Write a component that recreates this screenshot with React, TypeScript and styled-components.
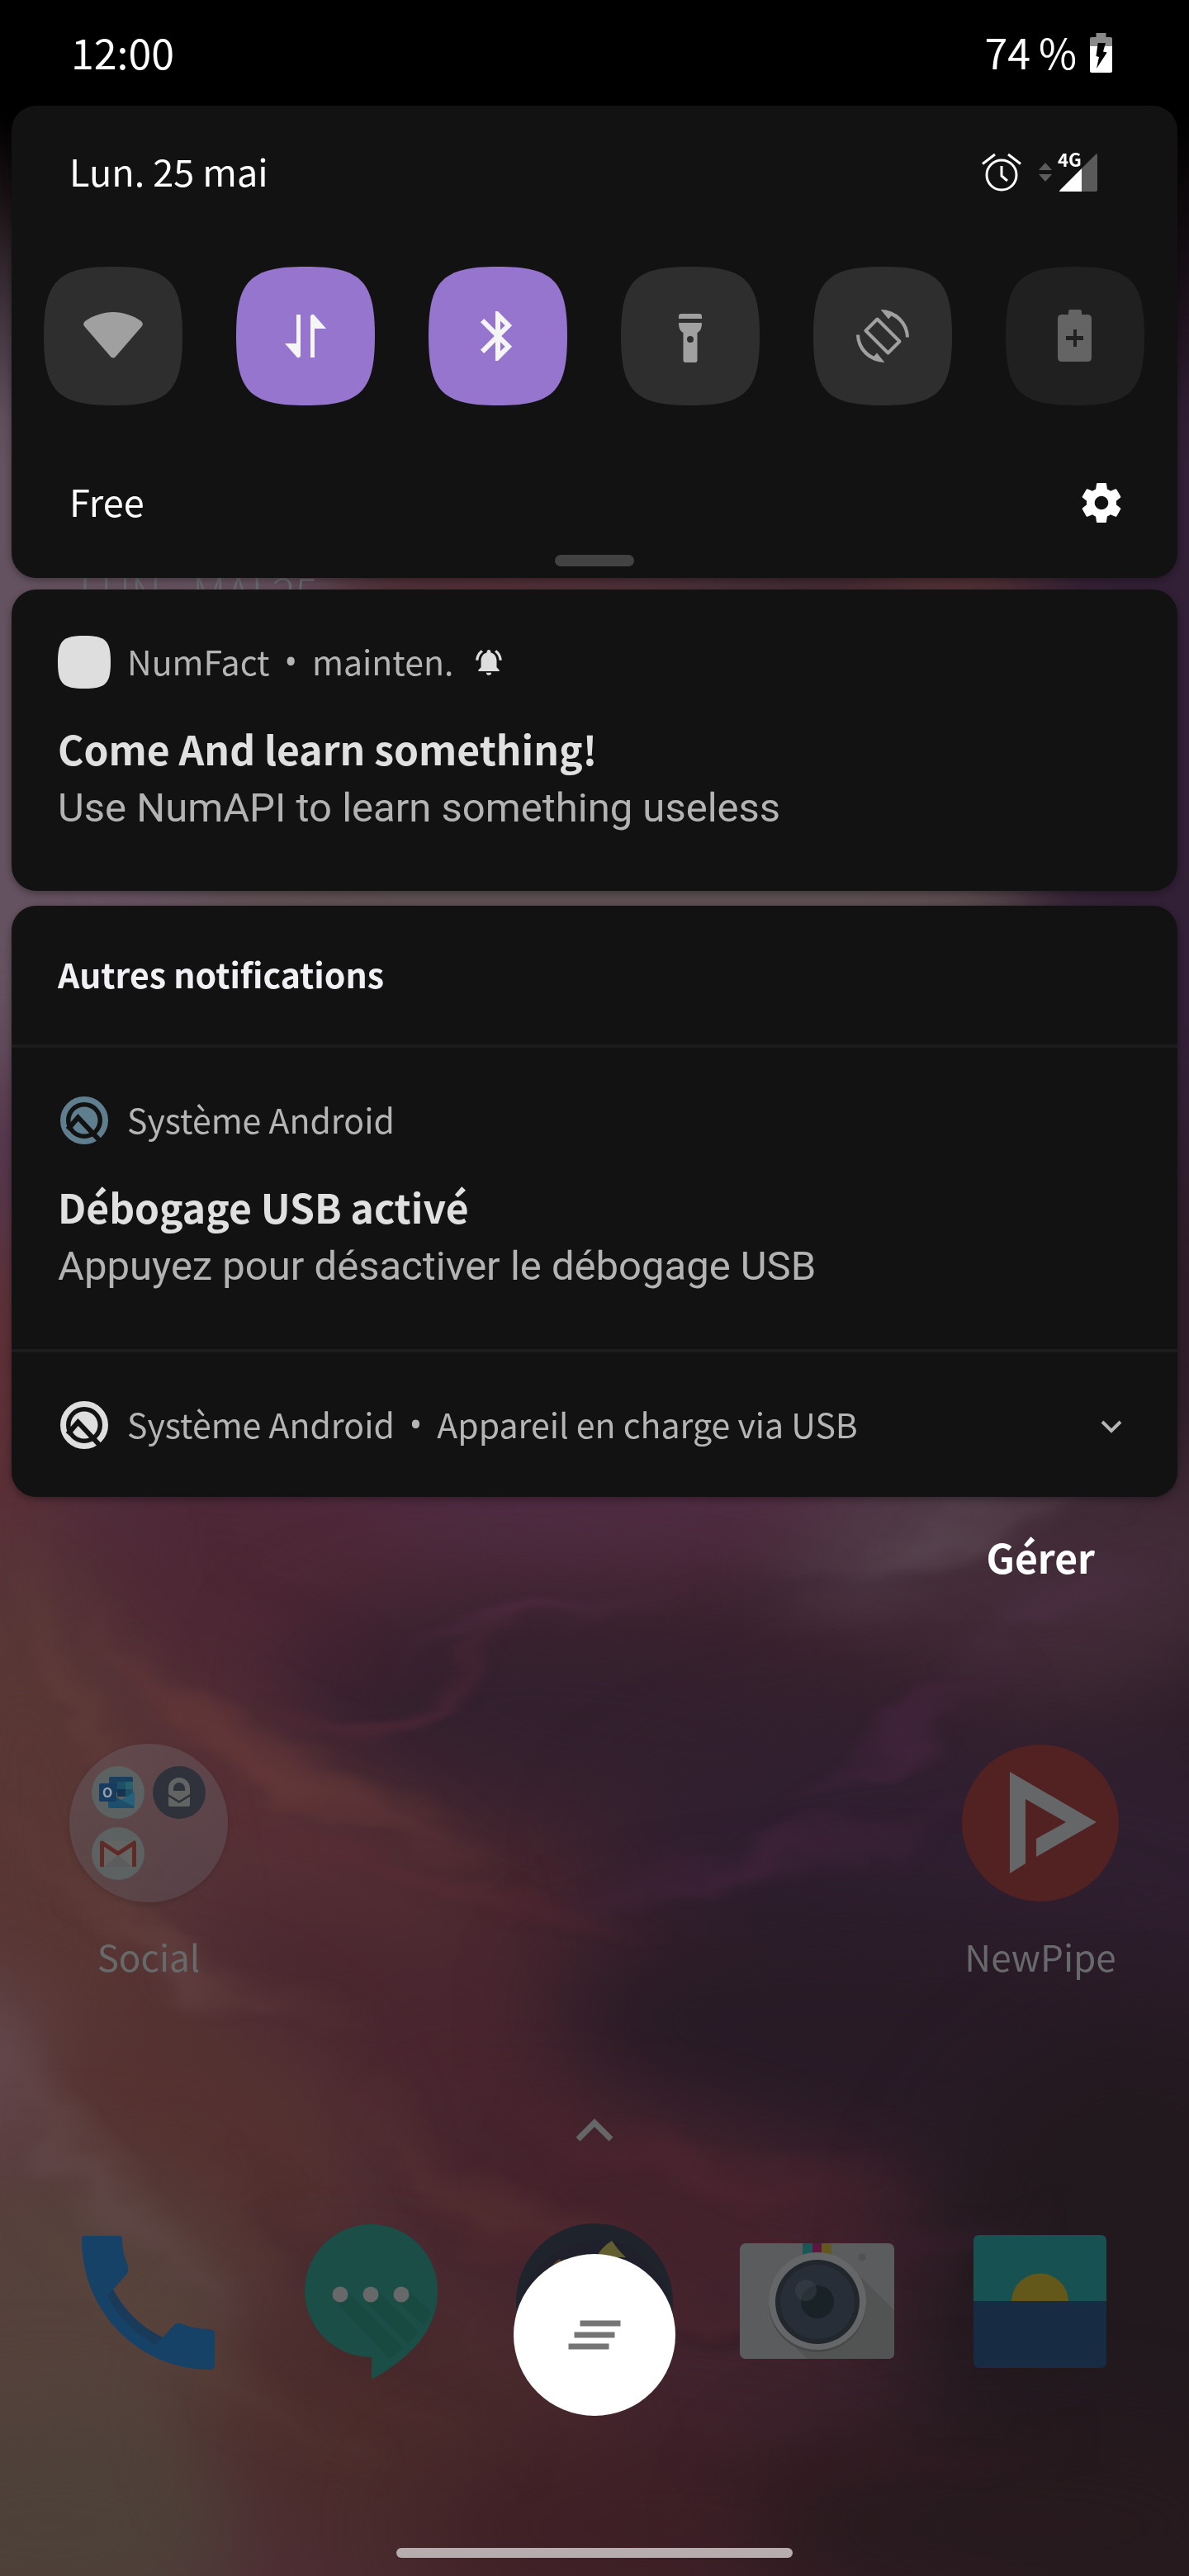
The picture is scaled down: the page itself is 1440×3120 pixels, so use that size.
import React from 'react';
import styled, { createGlobalStyle } from 'styled-components';

const slate = `"Noto Sans CJK SC", "Noto Sans", sans-serif`;
const roboto = `Roboto, "Noto Sans", sans-serif`;

const GlobalStyle = createGlobalStyle`
  *, *::before, *::after { box-sizing: border-box; }
  body { margin: 0; background: #000; font-family: ${slate}; }
  h1, h2, h3, p { margin: 0; font-size: inherit; font-weight: inherit; }
  svg { display: block; flex: none; }
`;

const Screen = styled.div`
  position: relative;
  isolation: isolate;
  display: grid;
  min-height: 100vh;
  overflow: hidden;
`;

const WallpaperSvg = styled.svg`
  position: absolute;
  inset: 0;
  width: 100%;
  height: 100%;
  z-index: -1;
`;

const HomeLayer = styled.main`
  grid-area: 1 / 1;
  display: flex;
  flex-direction: column;
  padding: 684px 84px 22px;
`;

const ShadeLayer = styled.section`
  position: relative;
  grid-area: 1 / 1;
  display: flex;
  flex-direction: column;
  padding-bottom: 194px;
`;

/* ---------- buttons ---------- */

const PlainButton = styled.button`
  display: flex;
  align-items: center;
  justify-content: center;
  padding: 0;
  border: 0;
  background: none;
  color: inherit;
  font: inherit;
  cursor: pointer;
`;

/* ---------- status bar ---------- */

const StatusBar = styled.header`
  display: flex;
  align-items: center;
  justify-content: space-between;
  height: 128px;
  padding: 0 93px 0 86px;
  color: #fff;
  font-size: 50px;
  line-height: 60px;
`;

const StatusGroup = styled.div<{ $gap: number }>`
  display: flex;
  align-items: center;
  gap: ${(p) => p.$gap}px;
`;

/* The face sits low in its line box; the padding lifts it level with icons. */
const Label = styled.span`
  padding-bottom: 4px;
`;

/* ---------- cards ---------- */

const Card = styled.section`
  margin: 0 14px;
  border-radius: 30px;
  background: #121212;
  box-shadow: 0 3px 10px rgba(0, 0, 0, 0.35);
`;

const QuickSettings = styled(Card)`
  display: flex;
  flex-direction: column;
  padding-bottom: 14px;
  margin-bottom: 14px;
  color: #fff;
  font-size: 45px;
  line-height: 60px;
`;

const QuickHeader = styled.div`
  display: flex;
  align-items: center;
  justify-content: space-between;
  height: 162px;
  padding: 0 97px 0 70px;
`;

const TileRow = styled.div`
  display: flex;
  justify-content: space-between;
  margin: 33px 40px 68px 39px;
`;

type TileState = 'on' | 'off' | 'disabled';
const tileBg: Record<TileState, string> = { on: '#9575cd', off: '#2e2e2e', disabled: '#202020' };
const tileFg: Record<TileState, string> = { on: '#f5f5f5', off: '#a0a0a0', disabled: '#646464' };

const Tile = styled(PlainButton)<{ $state: TileState }>`
  width: 168px;
  height: 168px;
  background: ${(p) => tileBg[p.$state]};
  color: ${(p) => tileFg[p.$state]};
  clip-path: path('M84 0C17 0 0 17 0 84S17 168 84 168 168 151 168 84 151 0 84 0Z');
`;

const QuickFooter = styled.div`
  display: flex;
  align-items: center;
  justify-content: space-between;
  height: 100px;
  padding: 0 62px 0 70px;
`;

const DragHandle = styled.div`
  align-self: center;
  width: 96px;
  height: 14px;
  margin-top: 13px;
  border-radius: 7px;
  background: #424242;
`;

const Alert = styled.article`
  padding: 56px 56px 65px;
`;

const AppLine = styled.div`
  display: flex;
  align-items: center;
  gap: 18px;
  min-height: 64px;
  color: #b5b5b5;
  font-size: 41px;
  line-height: 60px;
`;

const IconSlot = styled.span`
  display: grid;
  place-items: center;
  width: 66px;
  height: 64px;
  padding-right: 2px;
`;

const Bullet = styled(Label)`
  font-family: "Noto Sans", sans-serif;
`;

const AlertTitle = styled.h3`
  margin: 36px 0 2px;
  color: #e0e0e0;
  font-size: 48px;
  font-weight: 700;
  line-height: 72px;
`;

const AlertText = styled.p`
  color: #b3b3b3;
  font-family: ${roboto};
  font-size: 49px;
  line-height: 70px;
`;

const GroupCard = styled(Card)`
  margin-top: 18px;
`;

const GroupTitle = styled.h2`
  padding: 52px 56px 56px;
  color: #f0f0f4;
  font-size: 41px;
  font-weight: 700;
  line-height: 60px;
`;

const Divider = styled.hr`
  height: 4px;
  margin: 0;
  border: 0;
  background: #1c1c1e;
`;

const CompactAlert = styled.article`
  display: flex;
  align-items: center;
  justify-content: space-between;
  min-height: 175px;
  padding: 0 60px 0 56px;
`;

const ManageButton = styled(PlainButton)`
  align-self: flex-end;
  margin: 36px 114px 0 0;
  color: #fff;
  font-size: 48px;
  font-weight: 700;
  line-height: 72px;
`;

const ClearButton = styled(PlainButton)`
  align-self: center;
  width: 196px;
  height: 196px;
  margin-top: auto;
  border-radius: 50%;
  background: #fff;
`;

/* ---------- home screen ---------- */

const DateWidget = styled.p`
  padding-left: 12px;
  color: #686c6e;
  font-size: 52px;
  font-weight: 300;
  line-height: 64px;
`;

const AppRow = styled.nav`
  display: flex;
  justify-content: space-between;
`;

const HomeApps = styled(AppRow)`
  margin-top: auto;
`;

const AppLink = styled.a`
  display: flex;
  flex-direction: column;
  align-items: center;
  gap: 33px;
  width: 192px;
  color: #68696a;
  font-size: 44px;
  line-height: 64px;
  text-decoration: none;
`;

const Folder = styled.span`
  display: grid;
  grid-template-columns: 64px 64px;
  grid-template-rows: 64px 64px;
  gap: 10px;
  width: 192px;
  height: 192px;
  padding: 27px;
  border-radius: 50%;
  background: linear-gradient(#6a5f667a, #5e58606e);
  box-shadow: 0 2px 6px rgba(0, 0, 0, 0.12);
`;

const DrawerButton = styled(PlainButton)`
  align-self: center;
  margin: 163px 0 96px;
`;

const NavPill = styled.div`
  align-self: center;
  width: 480px;
  max-width: 100%;
  height: 12px;
  margin-top: 202px;
  border-radius: 6px;
  background: #b8adae;
`;

/* ---------- drawings ---------- */

type Stroke = { d: string; c: string; w: number; o: number };

const haze: [number, number, number, number, string, number, number][] = [
  // cx, cy, rx, ry, colour, opacity, rotation
  [0, 850, 420, 600, '#655260', 1, 0],
  [760, 1000, 560, 260, '#5e5052', 1, 0],
  [620, 690, 170, 60, '#552f38', 0.9, 0],
  [1190, 740, 150, 120, '#583438', 0.9, 20],
  [1440, 900, 190, 520, '#322036', 1, 0],
  [0, 1440, 110, 160, '#55354a', 1, 0],
  [0, 1700, 130, 200, '#5c3036', 1, 0],
  [620, 1790, 560, 130, '#4f2c42', 1, 0],
  [330, 1930, 240, 150, '#4e2735', 0.9, 30],
  [1120, 1850, 190, 70, '#56434e', 0.95, -28],
  [1330, 1920, 240, 130, '#452e3a', 0.9, -20],
  [760, 2090, 420, 130, '#33202e', 1, 8],
  [1180, 2260, 440, 160, '#2f1f30', 1, 0],
  [330, 2230, 280, 70, '#5a3135', 0.9, 32],
  [60, 2250, 130, 320, '#593734', 0.95, -12],
  [500, 2440, 240, 110, '#49252f', 0.8, 20],
  [1130, 2480, 460, 150, '#281b26', 1, 6],
  [20, 2540, 50, 140, '#705a62', 1, -30],
  [230, 2600, 220, 170, '#553230', 0.9, 30],
  [820, 2690, 320, 90, '#45222c', 0.9, 14],
  [1370, 2800, 260, 330, '#22191e', 1, 0],
  [90, 2850, 240, 220, '#56433d', 0.95, 20],
  [60, 3060, 230, 140, '#4d4139', 1, 0],
  [480, 2950, 240, 170, '#4b2c2b', 0.9, 20],
  [800, 3060, 300, 110, '#3d1f25', 0.9, 0],
  [1230, 3060, 320, 120, '#271a1e', 1, 0],
];

const wisps: Stroke[] = [
  { d: 'M110 1960C200 2110 400 2180 640 2250', c: '#6b3c3a', w: 34, o: 0.75 },
  { d: 'M60 1860C170 2090 330 2210 620 2260', c: '#6a3a3a', w: 14, o: 0.6 },
  { d: 'M200 2120C340 2250 520 2310 820 2335', c: '#5c2c36', w: 14, o: 0.7 },
  { d: 'M300 2060C440 2110 510 2110 545 2050S590 2000 680 1950', c: '#5c2c3a', w: 14, o: 0.7 },
  { d: 'M440 2020C560 1950 700 1970 860 1920', c: '#56304a', w: 12, o: 0.6 },
  { d: 'M640 2320C800 2250 1000 2260 1220 2170', c: '#4a2640', w: 22, o: 0.7 },
  { d: 'M960 2170C1100 2130 1120 2060 1250 2010', c: '#4e2846', w: 18, o: 0.7 },
  { d: 'M980 1920C1120 1880 1180 1830 1360 1800', c: '#63505c', w: 30, o: 0.6 },
  { d: 'M1150 2030C1200 1960 1260 1930 1430 1890', c: '#54304c', w: 24, o: 0.5 },
  { d: 'M-40 2150C80 2330 230 2390 460 2470', c: '#6a4440', w: 26, o: 0.45 },
  { d: 'M140 2290C165 2370 210 2390 280 2430', c: '#6d4f50', w: 26, o: 0.4 },
  { d: 'M400 2520C500 2590 520 2680 640 2700S780 2760 820 2800', c: '#5c3531', w: 40, o: 0.7 },
  { d: 'M600 2560C760 2600 860 2640 1120 2660', c: '#552833', w: 30, o: 0.6 },
  { d: 'M520 2680C700 2740 800 2800 1020 2830', c: '#50262e', w: 30, o: 0.6 },
  { d: 'M780 2838C860 2826 940 2832 1080 2826', c: '#2b1a22', w: 12, o: 0.7 },
  { d: 'M-40 2380C50 2600 160 2660 300 2840', c: '#6b5354', w: 36, o: 0.5 },
  { d: 'M-40 2600C120 2760 260 2900 480 2980', c: '#60493f', w: 44, o: 0.4 },
  { d: 'M260 2600C420 2760 460 2860 680 2980', c: '#3f222a', w: 40, o: 0.4 },
  { d: 'M0 1830C50 2000 90 2060 200 2200', c: '#653f3c', w: 22, o: 0.6 },
  { d: 'M960 2760C1080 2690 1180 2740 1300 2690', c: '#3d2130', w: 30, o: 0.5 },
  { d: 'M800 3000C980 2960 1100 3010 1340 2950', c: '#331c22', w: 34, o: 0.6 },
  { d: 'M250 1860C330 1980 440 2010 560 2020', c: '#45222f', w: 26, o: 0.5 },
  { d: 'M820 1960C960 1900 1060 1930 1200 1880', c: '#3b2433', w: 22, o: 0.5 },
];

const Wallpaper = () => (
  <WallpaperSvg viewBox="0 0 1440 3120" preserveAspectRatio="none" aria-hidden="true">
    <defs>
      <linearGradient id="base" x1="0" y1="0" x2="1" y2="0">
        <stop offset="0" stopColor="#57383c" />
        <stop offset="0.45" stopColor="#46262f" />
        <stop offset="1" stopColor="#2e1e29" />
      </linearGradient>
      <linearGradient id="fade" x1="0" y1="0" x2="0" y2="1">
        <stop offset="0" stopColor="#000" />
        <stop offset="0.24" stopColor="#000" />
        <stop offset="0.55" stopColor="#000" stopOpacity="0.55" />
        <stop offset="0.9" stopColor="#000" stopOpacity="0.06" />
        <stop offset="1" stopColor="#000" stopOpacity="0" />
      </linearGradient>
      {wisps.map((s, i) => (
        <linearGradient key={i} id={`wisp-${i}`} x1="0" y1="0" x2="1" y2="0">
          <stop offset="0" stopColor={s.c} stopOpacity="0" />
          <stop offset="0.45" stopColor={s.c} />
          <stop offset="1" stopColor={s.c} stopOpacity="0" />
        </linearGradient>
      ))}
      <filter
        id="soft"
        filterUnits="userSpaceOnUse"
        x="-700"
        y="0"
        width="2800"
        height="3700"
        colorInterpolationFilters="sRGB"
      >
        <feGaussianBlur stdDeviation="58" />
      </filter>
      <filter
        id="brush"
        filterUnits="userSpaceOnUse"
        x="-100"
        y="1700"
        width="1640"
        height="1420"
        colorInterpolationFilters="sRGB"
      >
        <feTurbulence type="fractalNoise" baseFrequency="0.006 0.012" numOctaves="3" seed="7" result="noise" />
        <feGaussianBlur in="SourceGraphic" stdDeviation="7" result="blurred" />
        <feDisplacementMap in="blurred" in2="noise" scale="90" xChannelSelector="R" yChannelSelector="G" />
      </filter>
    </defs>
    <rect width="1440" height="3120" fill="url(#base)" />
    {haze.map(([cx, cy, rx, ry, c, o, r], i) => (
      <g key={i} filter="url(#soft)" opacity={o}>
        <ellipse cx={cx} cy={cy} rx={rx} ry={ry} fill={c} transform={`rotate(${r} ${cx} ${cy})`} />
      </g>
    ))}
    <g fill="none" filter="url(#brush)">
      {wisps.map((s, i) => (
        <g key={i} stroke={`url(#wisp-${i})`} opacity={s.o}>
          <path d={s.d} strokeWidth={s.w * 2} opacity="0.4" />
          <path d={s.d} strokeWidth={s.w} opacity="0.5" />
          <path d={s.d} strokeWidth={s.w / 3} opacity="0.7" transform="translate(0 10)" />
        </g>
      ))}
    </g>
    <rect width="1440" height="560" fill="url(#fade)" />
  </WallpaperSvg>
);

const ChargingBattery = () => (
  <svg width="27" height="48" viewBox="0 0 27 48" role="img" aria-label="En charge">
    <path d="M7.500 0H19.500V5H25Q27 5 27 7V16H0V7Q0 5 2 5H7.500Z" fill="#8a8a8a" />
    <path d="M0 16H27V46Q27 48 25 48H2Q0 48 0 46Z" fill="#fff" />
    <path d="M9.700 12H19L16 22.400 20.700 23.400 8 43 11 29 7.500 28Z" fill="#000" />
  </svg>
);

const AlarmIcon = () => (
  <svg width="48" height="48" viewBox="0 0 48 48" fill="none" stroke="#fff" strokeWidth="3" role="img" aria-label="Alarme">
    <circle cx="24" cy="27" r="18" />
    <path d="M1 13.500L16 2M47 13.500L32 2M24 16V28L31 34" />
  </svg>
);

const DataArrows = () => (
  <svg width="16" height="24" viewBox="0 0 16 24" fill="#5c5c5c" aria-hidden="true">
    <path d="M0 9L8 0l8 9zM0 14h16l-8 9z" />
  </svg>
);

const SignalSvg = styled.svg`
  overflow: visible;
`;

const SignalLabel = styled.text`
  fill: #fff;
  font-family: ${slate};
  font-size: 22px;
  font-weight: 700;
`;

const SignalIcon = () => (
  <SignalSvg width="48" height="48" viewBox="0 0 48 48" role="img" aria-label="Signal 4G">
    <path d="M29 19L46 2Q48 0 48 3V45Q48 47 46 47H29Z" fill="#5a5a5a" />
    <path d="M29 19V47H3Q1 47 3 45Z" fill="#fff" />
    <SignalLabel x="0" y="17">4G</SignalLabel>
  </SignalSvg>
);

const TileIcon: React.FC<{ children: React.ReactNode; box?: number }> = ({ children, box = 72 }) => (
  <svg width="72" height="72" viewBox={`0 0 ${box} ${box}`} fill="currentColor" aria-hidden="true">
    {children}
  </svg>
);

const WifiIcon = () => (
  <TileIcon>
    <path d="M2 18C12 11 24 7 36 7s24 4 34 11q3 3 1 6L39 61q-3 3-6 0L1 24q-2-3 1-6z" />
  </TileIcon>
);

const MobileDataIcon = () => (
  <TileIcon>
    <path d="M25 10h5v50q-1 3-4 2L11 45h14zM47 62h-5V12q1-3 4-2L61 27H47z" />
  </TileIcon>
);

const BluetoothIcon = () => (
  <TileIcon box={24}>
    <path d="M17.710 7.710L12 2h-1v7.590L6.410 5 5 6.410 10.590 12 5 17.590 6.410 19 11 14.410V22h1l5.710-5.710-4.300-4.290 4.300-4.290zM13 5.830l1.880 1.880L13 9.590V5.830zm1.880 10.460L13 18.170v-3.760l1.880 1.880z" />
  </TileIcon>
);

const FlashlightIcon = () => (
  <TileIcon>
    <path d="M25 9H47Q50 9 50 12V15H22V12Q22 9 25 9Z" />
    <path
      fillRule="evenodd"
      d="M22 20H50C50 27 48 30 44.500 32V65Q44.500 68 42 68H30Q27.500 68 27.500 65V32C24 30 22 27 22 20ZM36 36a4 4 0 1 0 0 8 4 4 0 0 0 0-8Z"
    />
  </TileIcon>
);

const rotateArrow = 'M33.600 4L43 15.600 46.500 11.500A30 30 0 0 1 64 37.600H68A34 34 0 0 0 33.600 4Z';

const RotateIcon = () => (
  <TileIcon>
    <path d="M29.500 15.500L15.500 29.500 42.500 56.500 56.500 42.500Z" fill="none" stroke="currentColor" strokeWidth="4" strokeLinejoin="round" />
    <path d={rotateArrow} />
    <path transform="rotate(180 36 36)" d={rotateArrow} />
  </TileIcon>
);

const BatterySaverIcon = () => (
  <TileIcon>
    <path
      fillRule="evenodd"
      d="M30 4H42Q44 4 44 6V10H51Q56 10 56 15V62Q56 67 51 67H20Q15 67 15 62V15Q15 10 20 10H28V6Q28 4 30 4ZM34 28V36H25V41H34V49H38V41H46V36H38V28Z"
    />
  </TileIcon>
);

const GearIcon = () => (
  <svg width="60" height="60" viewBox="0 0 24 24" fill="#fff" aria-hidden="true">
    <path d="M19.140 12.940c.04-.3.06-.61.06-.94 0-.32-.02-.64-.07-.94l2.030-1.580c.18-.14.23-.41.12-.61l-1.920-3.320c-.12-.22-.37-.29-.59-.22l-2.390.96c-.5-.38-1.030-.7-1.620-.94l-.36-2.540c-.04-.24-.24-.41-.48-.41h-3.840c-.24 0-.43.17-.47.41l-.36 2.540c-.59.24-1.130.57-1.620.94l-2.390-.96c-.22-.08-.47 0-.59.22L2.740 8.870c-.12.21-.08.47.12.61l2.030 1.580c-.05.3-.09.63-.09.94s.02.64.07.94l-2.030 1.580c-.18.14-.23.41-.12.61l1.920 3.320c.12.22.37.29.59.22l2.390-.96c.5.38 1.030.7 1.620.94l.36 2.540c.05.24.24.41.48.41h3.840c.24 0 .44-.17.47-.41l.36-2.540c.59-.24 1.130-.56 1.620-.94l2.390.96c.22.08.47 0 .59-.22l1.920-3.320c.12-.22.07-.47-.12-.61l-2.010-1.580zM12 15.300c-1.820 0-3.300-1.480-3.300-3.300s1.480-3.300 3.300-3.300 3.300 1.480 3.300 3.300-1.480 3.300-3.300 3.300z" />
  </svg>
);

const NumFactIcon = () => (
  <svg width="64" height="64" viewBox="0 0 64 64" aria-hidden="true">
    <path d="M32 0C6 0 0 6 0 32S6 64 32 64 64 58 64 32 58 0 32 0Z" fill="#dedede" />
  </svg>
);

const BellSvg = styled.svg`
  margin-left: 6px;
`;

const BellIcon = () => (
  <BellSvg width="38" height="38" viewBox="0 0 24 24" fill="#dedede" role="img" aria-label="Alerte sonore">
    <path d="M7.580 4.080L6.150 2.650C3.750 4.480 2.170 7.300 2.030 10.500h2c.15-2.650 1.510-4.970 3.550-6.420zm12.390 6.420h2c-.15-3.200-1.730-6.020-4.120-7.850l-1.420 1.430c2.020 1.450 3.390 3.770 3.540 6.420zM18 11c0-3.070-1.640-5.640-4.500-6.320V4c0-.83-.67-1.500-1.500-1.500s-1.500.67-1.500 1.500v.68C7.630 5.360 6 7.920 6 11v5l-2 2v1h16v-1l-2-2v-5zm-6 11c.14 0 .27-.01.4-.04.65-.14 1.180-.58 1.440-1.180.1-.24.15-.5.15-.78h-4c.01 1.100.9 2 2.010 2z" />
  </BellSvg>
);

const SystemIcon: React.FC<{ color: string }> = ({ color }) => (
  <svg width="60" height="60" viewBox="0 0 60 60" aria-hidden="true">
    <circle cx="30" cy="30" r="25.500" fill="none" stroke={color} strokeWidth="7" />
    <circle cx="30" cy="30" r="16.500" fill={color} />
    <path d="M10 41L22.500 26.500 54 60" fill="none" stroke="#121212" strokeWidth="6" />
  </svg>
);

const ExpandIcon = () => (
  <svg width="40" height="40" viewBox="0 0 40 40" fill="none" stroke="#b5b5b5" strokeWidth="4" aria-hidden="true">
    <path d="M9 16L20 27 31 16" />
  </svg>
);

const ClearIcon = () => (
  <svg width="64" height="36" viewBox="0 0 64 36" fill="#757575" aria-hidden="true">
    <path d="M14.500 0.500h49v7h-49zM7.500 14.500h49v7h-49zM0.500 28.500h49v7h-49z" />
  </svg>
);

const DrawerIcon = () => (
  <svg width="48" height="32" viewBox="0 0 48 32" fill="none" stroke="#656667" strokeWidth="7" aria-hidden="true">
    <path d="M4 27L24 7 44 27" />
  </svg>
);

const MiniLabel = styled.text`
  fill: #9aa0a4;
  font-family: ${slate};
  font-size: 16px;
  font-weight: 700;
`;

const OutlookIcon = () => (
  <svg width="64" height="64" viewBox="0 0 64 64" aria-hidden="true">
    <circle cx="32" cy="32" r="32" fill="#5c6161" />
    <path d="M23 13H48Q50 13 50 15V32H21V15Q21 13 23 13Z" fill="#183f5c" />
    <path d="M31 19H41V28H31Z" fill="#1d5067" />
    <path d="M41 19H50V28H41Z" fill="#286070" />
    <path d="M31 28H41V37H31Z" fill="#153451" />
    <path d="M41 28H50V37H41Z" fill="#1d5067" />
    <path d="M20 32L36 41 52 31V49Q52 51 50 51H22Q20 51 20 49Z" fill="#1d4f6c" />
    <path d="M36 41L52 31V49Z" fill="#28607a" />
    <rect x="9" y="21" width="21" height="22" rx="2" fill="#173c60" />
    <MiniLabel x="13" y="38">O</MiniLabel>
  </svg>
);

const ProtonIcon = () => (
  <svg width="64" height="64" viewBox="0 0 64 64" aria-hidden="true">
    <circle cx="32" cy="32" r="32" fill="#30323b" />
    <path fillRule="evenodd" d="M19 34V27a13 13 0 0 1 26 0V34L32 42ZM25 30H39V27a7 7 0 0 0-14 0Z" fill="#626464" />
    <path d="M19 37L32 45 45 37V47Q45 49 43 49H21Q19 49 19 47Z" fill="#626464" />
  </svg>
);

const GmailIcon = () => (
  <svg width="64" height="64" viewBox="0 0 64 64" aria-hidden="true">
    <circle cx="32" cy="32" r="32" fill="#5c6161" />
    <path d="M12 17H52V48H12Z" fill="#646463" />
    <path d="M15 48L32 34 49 48Z" fill="#5b5c5b" />
    <path d="M12.500 48V19L32 32 51.500 19V48" fill="none" stroke="#5e2b29" strokeWidth="5" strokeLinejoin="round" />
  </svg>
);

const AppIcon: React.FC<{ children: React.ReactNode }> = ({ children }) => (
  <svg width="192" height="192" viewBox="0 0 192 192" aria-hidden="true">
    {children}
  </svg>
);

const NewPipeIcon = () => (
  <AppIcon>
    <circle cx="96" cy="96" r="95" fill="#522121" />
    <path d="M59 34L164 95 91 137V115L127 95 78 67V145L59 157Z" fill="#646667" />
  </AppIcon>
);

const PhoneIcon = () => (
  <AppIcon>
    <path
      d="M19 16H60q4 0 4 4 0 14 4 25 4 8 3 14 0 2-3 5L53 81C67 107 87 127 113 139L127 124q4-3 8-2 9 4 20 6 8 1 15 1 6 0 6 6v37q0 6-6 6C84 178 15 108 15 21q0-5 4-5z"
      fill="#164267"
    />
    <path d="M53 81C67 107 87 127 113 139l-9 9C78 134 58 113 46 88z" fill="#193b59" />
  </AppIcon>
);

const MessagesIcon = () => (
  <AppIcon>
    <path d="M96 163A80.500 80.500 0 1 1 176 84C176 125 150 160 96 190Z" fill="#1a4e47" />
    <path d="M64 81L134 151 118 165 51 94ZM102 81L153 132 140 147 88 94ZM139 81L168 110 159 124 126 94Z" fill="#194740" opacity="0.6" />
    {[58, 95, 132].map((cx) => (
      <circle key={cx} cx={cx} cy="87" r="9.500" fill="#666869" />
    ))}
  </AppIcon>
);

const BrowserIcon = () => (
  <AppIcon>
    <circle cx="96" cy="96" r="95" fill="#1f242c" />
    <circle cx="96" cy="112" r="92" fill="#20202c" clipPath="circle(95px at 96px 96px)" />
    <path d="M117 22C109 27 104 32 98 42H134C127 36 122 29 117 22Z" fill="#625e2f" />
    <path d="M54 44L60 54 42 58Q46 48 54 44Z" fill="#5c4226" />
  </AppIcon>
);

const CameraIcon = () => (
  <AppIcon>
    <rect x="2" y="25" width="187" height="140" rx="7" fill="#5a5c5d" />
    <path d="M137 54L189 106V158Q189 165 182 165H84L54 137Z" fill="#525454" />
    <path d="M78 25H90V42H78Z" fill="#1b5757" />
    <path d="M90 25H101V42H90Z" fill="#5e1640" />
    <path d="M101 25H113V42H101Z" fill="#62581e" />
    <circle cx="96" cy="98" r="59" fill="#474949" />
    <circle cx="96" cy="95" r="59" fill="#646667" />
    <circle cx="96" cy="96" r="51" fill="#22272e" />
    <circle cx="96" cy="96" r="45" fill="#282e38" />
    <circle cx="96" cy="96" r="20" fill="#182227" />
    <circle cx="82" cy="82" r="13" fill="#3b424c" opacity="0.5" />
    <circle cx="150" cy="42" r="4.500" fill="#4f5152" />
  </AppIcon>
);

const GalleryIcon = () => (
  <AppIcon>
    <path d="M22 15H169Q176 15 176 22V96H15V22Q15 15 22 15Z" fill="#185151" />
    <path d="M61 96a34.500 34.500 0 0 1 69 0Z" fill="#63581a" />
    <path d="M15 95H176V169Q176 176 169 176H22Q15 176 15 169Z" fill="#172b43" />
  </AppIcon>
);

/* ---------- data ---------- */

const tiles: { name: string; state: TileState; Icon: React.FC }[] = [
  { name: 'Wi-Fi', state: 'off', Icon: WifiIcon },
  { name: 'Données mobiles', state: 'on', Icon: MobileDataIcon },
  { name: 'Bluetooth', state: 'on', Icon: BluetoothIcon },
  { name: 'Lampe de poche', state: 'off', Icon: FlashlightIcon },
  { name: 'Rotation automatique', state: 'off', Icon: RotateIcon },
  { name: 'Économiseur de batterie', state: 'disabled', Icon: BatterySaverIcon },
];

const dock: { name: string; Icon: React.FC }[] = [
  { name: 'Téléphone', Icon: PhoneIcon },
  { name: 'Messages', Icon: MessagesIcon },
  { name: 'Navigateur', Icon: BrowserIcon },
  { name: 'Appareil photo', Icon: CameraIcon },
  { name: 'Galerie', Icon: GalleryIcon },
];

export default function App() {
  return (
    <>
      <GlobalStyle />
      <Screen>
        <Wallpaper />

        <HomeLayer>
          <DateWidget>LUN., MAI 25</DateWidget>
          <HomeApps aria-label="Applications">
            <AppLink href="#social">
              <Folder>
                <OutlookIcon />
                <ProtonIcon />
                <GmailIcon />
              </Folder>
              Social
            </AppLink>
            <AppLink href="#newpipe">
              <NewPipeIcon />
              NewPipe
            </AppLink>
          </HomeApps>
          <DrawerButton aria-label="Toutes les applications">
            <DrawerIcon />
          </DrawerButton>
          <AppRow aria-label="Favoris">
            {dock.map(({ name, Icon }) => (
              <AppLink key={name} href="#dock" aria-label={name}>
                <Icon />
              </AppLink>
            ))}
          </AppRow>
          <NavPill />
        </HomeLayer>

        <ShadeLayer>
          <StatusBar>
            <Label as="time">12:00</Label>
            <StatusGroup $gap={16}>
              <Label>{'74\u2009%'}</Label>
              <ChargingBattery />
            </StatusGroup>
          </StatusBar>

          <QuickSettings>
            <QuickHeader>
              <Label as="h1">Lun. 25 mai</Label>
              <StatusGroup $gap={7}>
                <StatusGroup $gap={21}>
                  <AlarmIcon />
                  <DataArrows />
                </StatusGroup>
                <SignalIcon />
              </StatusGroup>
            </QuickHeader>
            <TileRow>
              {tiles.map(({ name, state, Icon }) => (
                <Tile key={name} $state={state} aria-label={name} aria-pressed={state === 'on'}>
                  <Icon />
                </Tile>
              ))}
            </TileRow>
            <QuickFooter>
              <Label>Free</Label>
              <PlainButton aria-label="Paramètres">
                <GearIcon />
              </PlainButton>
            </QuickFooter>
            <DragHandle />
          </QuickSettings>

          <Card>
            <Alert>
              <AppLine>
                <IconSlot>
                  <NumFactIcon />
                </IconSlot>
                <Label>NumFact</Label>
                <Bullet>•</Bullet>
                <Label>mainten.</Label>
                <BellIcon />
              </AppLine>
              <AlertTitle>Come And learn something!</AlertTitle>
              <AlertText>Use NumAPI to learn something useless</AlertText>
            </Alert>
          </Card>

          <GroupCard>
            <GroupTitle>Autres notifications</GroupTitle>
            <Divider />
            <Alert>
              <AppLine>
                <IconSlot>
                  <SystemIcon color="#5f7f8e" />
                </IconSlot>
                <Label>Système Android</Label>
              </AppLine>
              <AlertTitle>Débogage USB activé</AlertTitle>
              <AlertText>Appuyez pour désactiver le débogage USB</AlertText>
            </Alert>
            <Divider />
            <CompactAlert>
              <AppLine>
                <IconSlot>
                  <SystemIcon color="#dedede" />
                </IconSlot>
                <Label>Système Android</Label>
                <Bullet>•</Bullet>
                <Label>Appareil en charge via USB</Label>
              </AppLine>
              <PlainButton aria-label="Développer">
                <ExpandIcon />
              </PlainButton>
            </CompactAlert>
          </GroupCard>

          <ManageButton>Gérer</ManageButton>
          <ClearButton aria-label="Tout effacer">
            <ClearIcon />
          </ClearButton>
        </ShadeLayer>
      </Screen>
    </>
  );
}
